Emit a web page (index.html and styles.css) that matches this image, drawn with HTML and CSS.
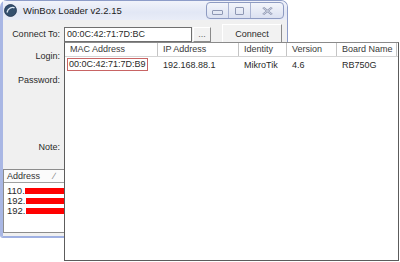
FILE: index.html
```html
<!DOCTYPE html>
<html>
    <head>
        <meta charset="utf-8">
        <title>WinBox Loader</title>
        <link rel="stylesheet" href="styles.css">
    </head>
    <body>
        <div class="window">
            <div class="titlebar">
                <svg class="logo" width="13" height="13" viewBox="0 0 13 13">
                    <circle cx="6.5" cy="6.5" r="6" fill="#34506e" stroke="#1f3450" stroke-width="0.8"/>
                    <path d="M3 8.5 C4 3.5, 9 2.5, 10.5 4" stroke="#dfe9f5" stroke-width="1.3" fill="none"/>
                </svg>
                <span class="title">WinBox Loader v2.2.15</span>
                <div class="caption">
                    <span class="cap-btn cap-min"><i class="min-glyph"></i></span>
                    <span class="cap-btn cap-max"><i class="max-glyph"></i></span>
                    <span class="cap-btn cap-close">
                        <svg width="11" height="8" viewBox="0 0 11 8">
                            <path d="M1 0.5 L10 7.5 M10 0.5 L1 7.5" stroke="#9098b2" stroke-width="2.2"/>
                            <path d="M1 0.5 L10 7.5 M10 0.5 L1 7.5" stroke="#e4e8f3" stroke-width="0.7"/>
                        </svg>
                    </span>
                </div>
            </div>
            <div class="form">
                <div class="row row-connect">
                    <label class="label">Connect To:</label>
                    <div class="input">00:0C:42:71:7D:BC</div>
                    <button class="btn btn-more">...</button>
                    <button class="btn btn-connect">Connect</button>
                </div>
                <div class="row row-login">
                    <label class="label">Login:</label>
                </div>
                <div class="row row-password">
                    <label class="label">Password:</label>
                </div>
                <div class="row row-note">
                    <label class="label">Note:</label>
                </div>
                <div class="list">
                    <div class="list-head">
                        <span class="list-col">Address <em class="sort">&#x2215;</em></span>
                    </div>
                    <div class="list-row">110.<span class="redact"></span></div>
                    <div class="list-row">192.<span class="redact"></span></div>
                    <div class="list-row">192.<span class="redact"></span></div>
                </div>
            </div>
        </div>

        <div class="dropdown">
            <div class="dd-head">
                <span class="col col-mac">MAC Address</span>
                <span class="col col-ip">IP Address</span>
                <span class="col col-id">Identity</span>
                <span class="col col-ver">Version</span>
                <span class="col col-board">Board Name</span>
            </div>
            <div class="dd-row">
                <span class="col col-mac"><span class="picked">00:0C:42:71:7D:B9</span></span>
                <span class="col col-ip">192.168.88.1</span>
                <span class="col col-id">MikroTik</span>
                <span class="col col-ver">4.6</span>
                <span class="col col-board">RB750G</span>
            </div>
        </div>
    </body>
</html>
```

FILE: styles.css
```css
body {
    margin: 0;
    width: 400px;
    height: 262px;
    position: relative;
    overflow: hidden;
    background: #ffffff;
    font-family: 'Liberation Sans', Arial, sans-serif;
    font-size: 9px;
    color: #2a2a2a;
}

.window {
    width: 288px;
    height: 238px;
    box-sizing: border-box;
    border: 1px solid #8d9cc8;
    border-left: 3px solid #a9b7e4;
    border-bottom: 2px solid #9fb0e2;
    border-radius: 7px 7px 0 3px;
    background: #f0f0f0;
    display: flex;
    flex-direction: column;
}

.titlebar {
    height: 19px;
    display: flex;
    align-items: center;
    background: linear-gradient(#f1f3fa, #e2e7f5 60%, #e9edf8);
    border-radius: 0 6px 0 0;
    padding-left: 1px;
}

.logo {
    flex: none;
}

.title {
    margin-left: 6px;
    font-size: 9.5px;
    color: #222;
}

.caption {
    margin-left: auto;
    margin-right: 3px;
    align-self: flex-start;
    margin-top: 1px;
    display: flex;
    height: 15px;
    border: 1px solid #8e9bc2;
    border-radius: 4px;
    overflow: hidden;
    background: linear-gradient(#f3f5fb, #dbe1f1);
}

.cap-btn {
    display: flex;
    align-items: center;
    justify-content: center;
    border-right: 1px solid #a9b3d2;
}

.cap-min { width: 21px; }
.cap-max { width: 21px; }
.cap-close {
    width: 32px;
    border-right: none;
}

.min-glyph {
    width: 9px;
    height: 3px;
    border: 1px solid #8f98b4;
    border-radius: 1px;
    margin-top: 4px;
}

.max-glyph {
    width: 7px;
    height: 6px;
    border: 1px solid #8f98b4;
    border-radius: 1px;
}

.form {
    display: flex;
    flex-direction: column;
    padding-top: 4px;
}

.row {
    display: flex;
    align-items: center;
    height: 16px;
}

.row-connect { height: 20px; }
.row-login { margin-top: 4px; }
.row-password { margin-top: 8px; }
.row-note { margin-top: 51px; }

.label {
    width: 57px;
    text-align: right;
    flex: none;
}

.input {
    margin-left: 4px;
    width: 128px;
    height: 15px;
    box-sizing: border-box;
    border: 1px solid #6f6f6f;
    background: #fff;
    padding-left: 2px;
    line-height: 13px;
}

.btn {
    font-family: inherit;
    font-size: 9px;
    color: #2a2a2a;
    background: #f2f2f2;
    border: 1px solid #fff;
    border-right-color: #8a8a8a;
    border-bottom-color: #8a8a8a;
    padding: 0;
}

.btn-more {
    margin-left: 1px;
    width: 18px;
    height: 15px;
    line-height: 10px;
    color: #666;
}

.btn-connect {
    margin-left: 11px;
    width: 60px;
    height: 20px;
}

.list {
    margin-top: 14px;
    margin-right: 1px;
    height: 64px;
    box-sizing: border-box;
    border: 1px solid #8c8c8c;
    background: #fff;
}

.list-head {
    height: 12px;
    border-bottom: 1px solid #a0a0a0;
    display: flex;
    background: #fbfbfb;
}

.list-col {
    width: 60px;
    padding-left: 3px;
    line-height: 12px;
    color: #333;
    border-right: 1px solid #c8c8c8;
}

.sort {
    font-style: normal;
    color: #777;
    margin-left: 11px;
}

.list-row {
    display: flex;
    align-items: center;
    height: 10px;
    padding-left: 3px;
    font-size: 9.5px;
    line-height: 10px;
}

.list-head + .list-row { margin-top: 3px; }

.redact {
    width: 80px;
    height: 6px;
    background: #ff0000;
}

.dropdown {
    position: absolute;
    left: 64px;
    top: 42px;
    width: 335px;
    height: 219px;
    box-sizing: border-box;
    border: 1px solid #5c5c5c;
    border-top-color: #8a8a8a;
    background: #fff;
}

.dd-head, .dd-row {
    display: flex;
}

.dd-head {
    height: 13px;
    border-bottom: 1px solid #d4d4d4;
    color: #3a3a3a;
}

.dd-head .col {
    border-right: 1px solid #c4c4c4;
    line-height: 13px;
}

.col {
    box-sizing: border-box;
    padding-left: 5px;
    white-space: nowrap;
    flex: none;
}

.col-mac { width: 93px; }
.col-ip { width: 81px; }
.col-id { width: 48px; }
.col-ver { width: 50px; }
.col-board { width: 60px; }

.dd-row {
    height: 15px;
    align-items: center;
}

.dd-row .col-mac {
    padding-left: 2px;
}

.picked {
    display: inline-block;
    border: 1px solid #c86464;
    padding: 0 1px;
    line-height: 11px;
}
```
